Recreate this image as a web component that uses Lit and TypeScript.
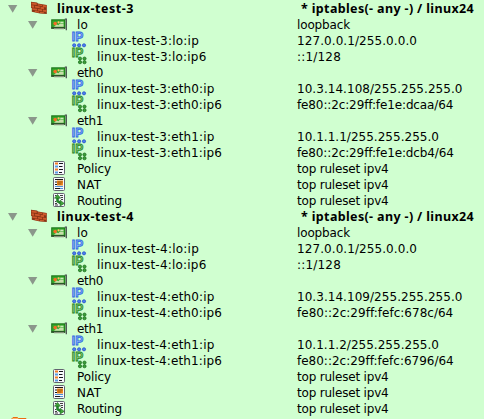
import { LitElement, html, svg, css } from "lit";
import { customElement, property } from "lit/decorators.js";

type Kind = "host" | "iface" | "ip4" | "ip6" | "policy" | "nat" | "routing";
// kind, name, name width, attribute, attribute width
type Row = [Kind, string, number, string, number];

const device = (n: number, a: string, b: string, c: string, d: string): Row[] => [
  ["host", `linux-test-${n}`, 77, "* iptables(- any -) / linux24", 173],
  ["iface", "lo", 11, "loopback", 53],
  ["ip4", `linux-test-${n}:lo:ip`, 102, "127.0.0.1/255.0.0.0", 120],
  ["ip6", `linux-test-${n}:lo:ip6`, 109.5, "::1/128", 44],
  ["iface", "eth0", 26, "", 0],
  ["ip4", `linux-test-${n}:eth0:ip`, 117.5, a, 165.5],
  ["ip6", `linux-test-${n}:eth0:ip6`, 125, b, 156.5],
  ["iface", "eth1", 26, "", 0],
  ["ip4", `linux-test-${n}:eth1:ip`, 117.5, c, 142],
  ["ip6", `linux-test-${n}:eth1:ip6`, 125, d, 157],
  ["policy", "Policy", 34, "top ruleset ipv4", 91.5],
  ["nat", "NAT", 24.5, "top ruleset ipv4", 91.5],
  ["routing", "Routing", 45, "top ruleset ipv4", 91.5],
];

const rows: Row[] = [
  ...device(3, "10.3.14.108/255.255.255.0", "fe80::2c:29ff:fe1e:dcaa/64", "10.1.1.1/255.255.255.0", "fe80::2c:29ff:fe1e:dcb4/64"),
  ...device(4, "10.3.14.109/255.255.255.0", "fe80::2c:29ff:fefc:678c/64", "10.1.1.2/255.255.255.0", "fe80::2c:29ff:fefc:6796/64"),
];

const sheet = svg`<rect x="2.5" y="1.5" width="11" height="13" rx="1" fill="#f8f9fd" stroke="#62636f"/>`;

const art: Record<Kind, unknown> = {
  host: svg`
    <path d="M0 1.8 6 2.6 7 3.6 15.8 4.9V14L9 13.4 .8 11.8V8.2L0 7.8Z" fill="#8a3415"/>
    <path d="M.5 2.5 5.7 3.2V5.1L.5 4.4ZM.5 5.3 3 5.6V7.8L.5 7.2ZM3.8 5.8 8.8 6.4V8.3L3.8 7.6ZM6.8 4.2 11 4.8V6.1L6.8 5.5ZM11.8 5 15.4 5.5V7.6L11.8 7.1ZM9.6 6.8 13 7.2V9.2L9.6 8.8ZM1.3 8.2 6 8.8V10.4L1.3 9.7ZM6.8 9 11 9.6V11.2L6.8 10.6ZM11.8 9.7 15.4 10.1V12L11.8 11.5ZM3.8 10.8 8.2 11.4V12.8L3.8 12ZM9 11.7 13 12.2V13.3L9 13Z" fill="#cd592b"/>`,
  iface: svg`
    <path d="M.2 3.3H14.4V12.7H.2Z" fill="#157012"/>
    <path d="M1.2 4.4H13.4V11H1.2Z" fill="#35a82b"/>
    <path d="M.2 11.3H14V12.7H.2Z" fill="#334d30"/>
    <path d="M3 12.2H13V13.3H3Z" fill="#9aa08e"/>
    <path d="M3 10.8 5.5 8.2 7.3 9.3 9 7.4H12.6V10.8Z" fill="#c6dfab"/>
    <circle cx="4.2" cy="7.6" r="1.8" fill="#f36c24"/>
    <circle cx="7.6" cy="6.3" r="1.1" fill="#ffc463"/>
    <path d="M9.3 6.3H12.5" stroke="#e4efcf" stroke-width="1.2"/>
    <path d="M13.8 3.2H15.3V14.3" fill="none" stroke="#4c5250" stroke-width="1.3"/>`,
  ip4: svg`
    <text class="ip" x="-.2" y="9.3" fill="#8db5ff" stroke="#2f68e0">IP</text>
    <g fill="#4b7df0" stroke="#204bc4" stroke-width=".7"><circle cx="2.2" cy="13.3" r="1.6"/><circle cx="7.1" cy="13.3" r="1.6"/><circle cx="12" cy="13.3" r="1.6"/></g>`,
  ip6: svg`
    <text class="ip" x="-.2" y="9.3" fill="#8fcf86" stroke="#1f8424">IP</text>
    <g fill="#3f9d3a" stroke="#126b18" stroke-width=".7"><circle cx="8" cy="10.6" r="1.6"/><circle cx="12.5" cy="10.6" r="1.6"/><circle cx="8" cy="14.2" r="1.6"/><circle cx="12.5" cy="14.2" r="1.6"/></g>`,
  policy: svg`${sheet}
    <path d="M4 3.5H7M4 9.5H7" stroke="#f07c25" stroke-width="2"/>
    <path d="M4 6.5H7M4 12.5H7" stroke="#579be0" stroke-width="2"/>
    <path d="M8 3.5H12M8 6.5H11.5M8 9.5H12M8 12.5H11" stroke="#15151c"/>`,
  nat: svg`${sheet}
    <path d="M4 3.5H12M4 6H6M4 8.5H6" stroke="#151515"/>
    <path d="M6 4.5H12V9.5H6Z" fill="#f28b20"/>
    <path d="M6.5 6H11.5M6.5 8H10.5" stroke="#6b3f0b" stroke-width=".7"/>
    <path d="M4 10.5H12" stroke="#4f91d8"/>
    <path d="M4 12.5H9" stroke="#171717"/><path d="M9 12.5H12" stroke="#4f91d8"/>`,
  routing: svg`${sheet}
    <path d="M4 3.5H5.5M9 3.5H12M10 5.5H12M4 9.5H5M4 11.5H6M4 13H7M10 7.5H12" stroke="#292929" stroke-width=".9"/>
    <path d="M6.5 5V9.3L10.5 11.5" fill="none" stroke="#22842a" stroke-width="2.6"/>
    <path d="M3.5 6.2 6.5 2.5 9.7 6.2ZM9.2 8.2 13.2 11.4 9.2 14Z" fill="#43a63b" stroke="#17631b" stroke-width=".6"/>`,
};

@customElement("tree-row")
class TreeRow extends LitElement {
  @property({ attribute: false }) row!: Row;

  static styles = css`
    :host { display: block; height: 16px; }
    .line { display: flex; height: 16px; }
    .cell { display: flex; box-sizing: border-box; width: 297px; flex: none; }
    .arrow { width: 10px; height: 16px; flex: none; }
    .icon { width: 16px; height: 16px; flex: none; overflow: visible; }
    .label { line-height: 16px; padding-top: 1px; white-space: pre; flex: none; }
    .host .cell { padding-left: 8px; width: 301px; }
    .host .icon, .iface .icon { margin: 0 10px 0 13px; }
    .host .label { font: bold 12.5px/16px "Noto Sans", sans-serif; }
    .iface .cell { padding-left: 28px; }
    .ip4 .cell, .ip6 .cell { padding-left: 72px; }
    .ip4 .icon, .ip6 .icon { margin-right: 9px; }
    .policy .cell, .nat .cell, .routing .cell { padding-left: 51px; }
    .policy .icon, .nat .icon, .routing .icon { margin-right: 10px; }
    .ip { font: bold 12px "Liberation Sans", sans-serif; stroke-width: .8px; }
  `;

  firstUpdated() {
    this.renderRoot.querySelectorAll<HTMLElement>(".label").forEach((el, i) => {
      const text = this.row[i ? 3 : 1] as string;
      const target = this.row[i ? 4 : 2] as number;
      if (!text) return;
      el.style.letterSpacing = `${(target - el.getBoundingClientRect().width) / text.length}px`;
    });
  }

  render() {
    const [kind, name, , value] = this.row;
    const open = kind === "host" || kind === "iface";
    return html`<div class="line ${kind}">
      <div class="cell">
        ${open ? html`<svg class="arrow" viewBox="0 0 10 16"><path d="M0 5H9.3L4.7 12.7Z" fill="#8b978b"/></svg>` : ""}
        <svg class="icon" viewBox="0 0 16 16">${art[kind]}</svg>
        <span class="label">${name}</span>
      </div>
      <span class="label value">${value}</span>
    </div>`;
  }
}

@customElement("app-root")
class AppRoot extends LitElement {
  static styles = css`
    :host {
      display: block; height: 419px; overflow: hidden; background: #d0ffd0; color: #000;
      font: 12px "DejaVu Sans", sans-serif;
    }
    .next { display: block; width: 16px; height: 3px; margin-left: 11px; }
  `;
  render() {
    return html`${rows.map((r) => html`<tree-row .row=${r}></tree-row>`)}
      <svg class="next" viewBox="0 0 16 3"><path d="M1 4V2.5L2 1.5H6.5L7.5 2.5H15V4Z" fill="#fbb468" stroke="#ea6d10"/></svg>`;
  }
}
